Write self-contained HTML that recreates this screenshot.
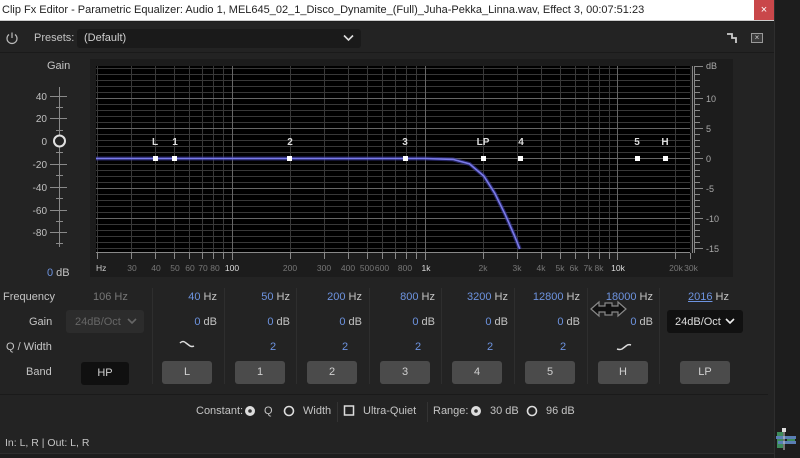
<!DOCTYPE html>
<html><head><meta charset="utf-8"><style>
*{margin:0;padding:0;box-sizing:border-box}
body{width:800px;height:458px;background:#1d1d1d;font-family:"Liberation Sans",sans-serif;overflow:hidden;position:relative;color:#c4c4c4}
.a{position:absolute;white-space:nowrap}
.t{font-size:11px}
.b{color:#6d93df}
.btn{position:absolute;height:23px;width:50px;background:#4b4b4b;border-radius:3px;color:#d0d0d0;font-size:11px;text-align:center;line-height:23px}
.sep{position:absolute;top:288px;width:1px;height:96px;background:#2e2e2e}
.v{position:absolute;width:60px;text-align:right;font-size:11px}
</style></head><body>
<div class="a" style="left:0;top:0;width:774px;height:21px;background:#fff;border-bottom:1px solid #ccc"></div>
<div class="a" style="left:2px;top:4px;font-size:11px;color:#222">Clip Fx Editor - Parametric Equalizer: Audio 1, MEL645_02_1_Disco_Dynamite_(Full)_Juha-Pekka_Linna.wav, Effect 3, 00:07:51:23</div>
<div class="a" style="left:754px;top:0;width:20px;height:20px;background:#c9474a;color:#fff;font-size:11px;text-align:center;line-height:20px">×</div>
<div class="a" style="left:0;top:22px;width:774px;height:431px;background:#232323"></div>
<div class="a" style="left:0;top:52px;width:774px;height:1px;background:#1a1a1a"></div>
<div class="a" style="left:774px;top:0;width:1px;height:458px;background:#2e2e2e"></div>
<div class="a" style="left:0;top:453px;width:774px;height:1px;background:#2e2e2e"></div>
<svg class="a" style="left:5px;top:31px" width="14" height="14" viewBox="0 0 14 14"><path d="M4 3.5A5 5 0 1 0 10 3.5" fill="none" stroke="#bbb" stroke-width="1.2"/><path d="M7 1.5V7" stroke="#bbb" stroke-width="1.2"/></svg>
<div class="a t" style="left:34px;top:32px">Presets:</div>
<div class="a" style="left:77px;top:29px;width:284px;height:19px;background:#1a1a1a;border-radius:3px"></div>
<div class="a t" style="left:84px;top:32px;color:#d0d0d0">(Default)</div>
<svg class="a" style="left:343px;top:34px" width="11" height="8"><path d="M1 1.5L5.5 6 10 1.5" fill="none" stroke="#ddd" stroke-width="1.6"/></svg>
<svg class="a" style="left:726px;top:32px" width="12" height="12"><path d="M1 2H6V6H10V11" fill="none" stroke="#ccc" stroke-width="1.8"/></svg>
<div class="a" style="left:751px;top:33px;width:12px;height:10px;border:1px solid #999;background:#3a3a3a;color:#ccc;font-size:8px;text-align:center;line-height:8px">×</div>
<div class="a t" style="left:47px;top:60px">Gain</div>
<svg class="a" style="left:0;top:0" width="800" height="458">
<g stroke="#8a8a8a" stroke-width="1">
<line x1="59.5" y1="87" x2="59.5" y2="247"/>
<line x1="50" y1="96.5" x2="67" y2="96.5"/><line x1="50" y1="118.5" x2="67" y2="118.5"/><line x1="50" y1="164.5" x2="67" y2="164.5"/><line x1="50" y1="187.5" x2="67" y2="187.5"/><line x1="50" y1="210.5" x2="67" y2="210.5"/><line x1="50" y1="232.5" x2="67" y2="232.5"/>
<line x1="56" y1="107.5" x2="63" y2="107.5"/><line x1="56" y1="130.5" x2="63" y2="130.5"/><line x1="56" y1="152.5" x2="63" y2="152.5"/><line x1="56" y1="175.5" x2="63" y2="175.5"/><line x1="56" y1="198.5" x2="63" y2="198.5"/><line x1="56" y1="221.5" x2="63" y2="221.5"/><line x1="56" y1="243.5" x2="63" y2="243.5"/>
</g>
<circle cx="59.5" cy="141" r="5.5" fill="#232323" stroke="#e0e0e0" stroke-width="2"/>
<g font-size="10" fill="#c0c0c0" text-anchor="end" font-family="Liberation Sans">
<text x="47" y="100">40</text><text x="47" y="122">20</text><text x="47" y="145">0</text><text x="47" y="168">-20</text><text x="47" y="191">-40</text><text x="47" y="214">-60</text><text x="47" y="236">-80</text></g>
<rect x="90" y="59" width="643" height="218" fill="#1c1c1c"/>
<rect x="96" y="66" width="594" height="187" fill="#000"/>
<g stroke="#383838" stroke-width="1">
<path d="M96 68.5H690M96 74.5H690M96 80.5H690M96 86.5H690M96 92.5H690M96 104.5H690M96 110.5H690M96 116.5H690M96 122.5H690M96 134.5H690M96 140.5H690M96 146.5H690M96 152.5H690M96 164.5H690M96 170.5H690M96 176.5H690M96 182.5H690M96 194.5H690M96 200.5H690M96 206.5H690M96 212.5H690M96 224.5H690M96 230.5H690M96 236.5H690M96 242.5H690M96 248.5H690"/>
<path d="M97.5 66V253M131.5 66V253M155.5 66V253M174.5 66V253M189.5 66V253M202.5 66V253M213.5 66V253M223.5 66V253M290.5 66V253M324.5 66V253M348.5 66V253M367.5 66V253M382.5 66V253M395.5 66V253M406.5 66V253M416.5 66V253M483.5 66V253M517.5 66V253M541.5 66V253M560.5 66V253M575.5 66V253M588.5 66V253M599.5 66V253M609.5 66V253M675.5 66V253"/>
</g>
<g stroke="#666" stroke-width="1"><path d="M96 98.5H690M96 128.5H690M96 158.5H690M96 188.5H690M96 218.5H690"/><path d="M232.5 66V253M425.5 66V253M617.5 66V253"/></g>
<g stroke="#888" stroke-width="1">
<path d="M96 252.5H690"/>
<path d="M97.5 253V259M131.5 253V259M155.5 253V259M174.5 253V259M189.5 253V259M202.5 253V259M213.5 253V259M223.5 253V259M232.5 253V260M290.5 253V259M324.5 253V259M348.5 253V259M367.5 253V259M382.5 253V259M395.5 253V259M406.5 253V259M416.5 253V259M425.5 253V260M483.5 253V259M517.5 253V259M541.5 253V259M560.5 253V259M575.5 253V259M588.5 253V259M599.5 253V259M609.5 253V259M617.5 253V260M675.5 253V259M690.5 253V259"/>
<path d="M692.5 66V253M694.5 66V253"/>
<path d="M695 66.5H703M695 98.5H703M695 128.5H703M695 158.5H703M695 188.5H703M695 218.5H703M695 248.5H703"/>
<path d="M695 74.5H700M695 80.5H700M695 86.5H700M695 92.5H700M695 104.5H700M695 110.5H700M695 116.5H700M695 122.5H700M695 134.5H700M695 140.5H700M695 146.5H700M695 152.5H700M695 164.5H700M695 170.5H700M695 176.5H700M695 182.5H700M695 194.5H700M695 200.5H700M695 206.5H700M695 212.5H700M695 224.5H700M695 230.5H700M695 236.5H700M695 242.5H700"/>
</g>
<g font-size="9" fill="#aaa" font-family="Liberation Sans"><text x="706" y="69">dB</text><text x="706" y="102">10</text><text x="706" y="132">5</text><text x="706" y="162">0</text><text x="706" y="192">-5</text><text x="706" y="222">-10</text><text x="706" y="252">-15</text></g>
<g font-size="8.5" fill="#777" text-anchor="middle" font-family="Liberation Sans">
<text x="96" y="271" fill="#ccc" text-anchor="start">Hz</text><text x="132" y="271">30</text><text x="156" y="271">40</text><text x="175" y="271">50</text><text x="190" y="271">60</text><text x="203" y="271">70</text><text x="215" y="271">80</text><text x="232" y="271" fill="#ddd">100</text><text x="290" y="271">200</text><text x="324" y="271">300</text><text x="348" y="271">400</text><text x="367" y="271">500</text><text x="382" y="271">600</text><text x="405" y="271">800</text><text x="426" y="271" fill="#ddd">1k</text><text x="483" y="271">2k</text><text x="517" y="271">3k</text><text x="541" y="271">4k</text><text x="560" y="271">5k</text><text x="574" y="271">6k</text><text x="588" y="271">7k</text><text x="599" y="271">8k</text><text x="618" y="271" fill="#ddd">10k</text><text x="676" y="271">20k</text><text x="691" y="271">30k</text></g>
<path d="M96 158.5H425 L453 159.4 L469.5 163.9 L483.8 176 L494.8 193.3 L505.1 214.3 L514.2 235 L519.8 249" fill="none" stroke="#3a3aa0" stroke-width="4" opacity="0.6"/>
<path d="M96 158.5H425 L453 159.4 L469.5 163.9 L483.8 176 L494.8 193.3 L505.1 214.3 L514.2 235 L519.8 249" fill="none" stroke="#7a7ae8" stroke-width="1.6"/>
<g fill="#fff"><rect x="153" y="156" width="5" height="5"/><rect x="172" y="156" width="5" height="5"/><rect x="287" y="156" width="5" height="5"/><rect x="403" y="156" width="5" height="5"/><rect x="481" y="156" width="5" height="5"/><rect x="518" y="156" width="5" height="5"/><rect x="635" y="156" width="5" height="5"/><rect x="663" y="156" width="5" height="5"/></g>
<g font-size="10" fill="#ddd" text-anchor="middle" font-family="Liberation Sans" font-weight="bold"><text x="155" y="145">L</text><text x="175" y="145">1</text><text x="290" y="145">2</text><text x="405" y="145">3</text><text x="483" y="145">LP</text><text x="521" y="145">4</text><text x="637" y="145">5</text><text x="665" y="145">H</text></g>
<path d="M180 343 Q183 340 186 343 L190 346 Q192 347 194 346" fill="none" stroke="#ddd" stroke-width="1.5"/>
<path d="M617 349 Q620 350 622 349 L626 346 Q628 344 631 345" fill="none" stroke="#ddd" stroke-width="1.5"/>
<path d="M591 309 L599 302 V306 H605 V303 H612 V306 H618 V302 L626 309 L618 316 V312 H612 V315 H605 V312 H599 V316 Z" fill="#111" stroke="#888" stroke-width="1.2"/>
<circle cx="250" cy="411" r="5" fill="#ddd"/><circle cx="250" cy="411" r="1.8" fill="#333"/>
<circle cx="289" cy="411" r="4.5" fill="none" stroke="#ddd" stroke-width="1.6"/>
<rect x="344.5" y="406" width="9" height="9" fill="none" stroke="#ddd" stroke-width="1.5"/>
<circle cx="476" cy="411" r="5" fill="#ddd"/><circle cx="476" cy="411" r="1.8" fill="#333"/>
<circle cx="532" cy="411" r="4.5" fill="none" stroke="#ddd" stroke-width="1.6"/>
<rect x="337" y="402" width="1" height="20" fill="#333"/><rect x="427" y="402" width="1" height="20" fill="#333"/>
<rect x="0" y="394" width="768" height="1" fill="#1a1a1a"/>
<rect x="777" y="432" width="6" height="16" fill="#3d8b5a"/><rect x="787" y="438" width="8" height="5" fill="#3d8b5a"/><rect x="776" y="436" width="20" height="3" fill="#5a7fb5"/><rect x="778" y="441" width="18" height="3" fill="#5a7fb5"/><rect x="783.5" y="430" width="1" height="20" fill="#ccc"/><rect x="782" y="428" width="4" height="4" fill="#ddd"/>
<path d="M128 319L132 323 136 319" fill="none" stroke="#666" stroke-width="1.6"/>
<path d="M726 319L730 323 734 319" fill="none" stroke="#eee" stroke-width="1.6"/>
</svg>
<div class="a t" style="left:47px;top:267px"><span class="b">0</span> dB</div>
<div class="a t" style="left:3px;top:291px">Frequency</div>
<div class="a t" style="left:29px;top:316px">Gain</div>
<div class="a t" style="left:6px;top:341px">Q / Width</div>
<div class="a t" style="left:26px;top:366px">Band</div>
<div class="a t" style="left:93px;top:291px;color:#777">106 Hz</div>
<div class="a" style="left:66px;top:310px;width:78px;height:23px;background:#2c2c2c;border-radius:3px;z-index:-0"></div>
<div class="a t" style="left:75px;top:316px;color:#666">24dB/Oct</div>
<div class="btn" style="left:81px;top:362px;width:48px;background:#101010">HP</div>
<div class="sep" style="left:152px"></div><div class="sep" style="left:224px"></div><div class="sep" style="left:296px"></div><div class="sep" style="left:369px"></div><div class="sep" style="left:441px"></div><div class="sep" style="left:514px"></div><div class="sep" style="left:587px"></div><div class="sep" style="left:659px"></div>
<div class="v" style="left:157px;top:291px"><span class="b">40</span> Hz</div>
<div class="v" style="left:230px;top:291px"><span class="b">50</span> Hz</div>
<div class="v" style="left:302px;top:291px"><span class="b">200</span> Hz</div>
<div class="v" style="left:375px;top:291px"><span class="b">800</span> Hz</div>
<div class="v" style="left:448px;top:291px"><span class="b">3200</span> Hz</div>
<div class="v" style="left:520px;top:291px"><span class="b">12800</span> Hz</div>
<div class="v" style="left:593px;top:291px"><span class="b">18000</span> Hz</div>
<div class="a t" style="left:688px;top:291px"><span class="b" style="text-decoration:underline">2016</span> Hz</div>
<div class="v" style="left:157px;top:316px"><span class="b">0</span> dB</div>
<div class="v" style="left:230px;top:316px"><span class="b">0</span> dB</div>
<div class="v" style="left:302px;top:316px"><span class="b">0</span> dB</div>
<div class="v" style="left:375px;top:316px"><span class="b">0</span> dB</div>
<div class="v" style="left:448px;top:316px"><span class="b">0</span> dB</div>
<div class="v" style="left:520px;top:316px"><span class="b">0</span> dB</div>
<div class="v" style="left:593px;top:316px"><span class="b">0</span> dB</div>
<div class="a" style="left:667px;top:310px;width:76px;height:23px;background:#111;border-radius:3px"></div>
<div class="a t" style="left:675px;top:316px;color:#ddd">24dB/Oct</div>
<svg class="a" style="left:0;top:0" width="800" height="458"><path d="M128 319L132 323 136 319" fill="none" stroke="#666" stroke-width="1.6"/><path d="M726 319L730 323 734 319" fill="none" stroke="#eee" stroke-width="1.6"/></svg>
<div class="a t b" style="left:270px;top:341px">2</div>
<div class="a t b" style="left:342px;top:341px">2</div>
<div class="a t b" style="left:415px;top:341px">2</div>
<div class="a t b" style="left:487px;top:341px">2</div>
<div class="a t b" style="left:560px;top:341px">2</div>
<div class="btn" style="left:162px;top:361px">L</div>
<div class="btn" style="left:235px;top:361px">1</div>
<div class="btn" style="left:307px;top:361px">2</div>
<div class="btn" style="left:380px;top:361px">3</div>
<div class="btn" style="left:452px;top:361px">4</div>
<div class="btn" style="left:525px;top:361px">5</div>
<div class="btn" style="left:598px;top:361px">H</div>
<div class="btn" style="left:680px;top:361px">LP</div>
<div class="a t" style="left:196px;top:405px">Constant:</div>
<div class="a t" style="left:264px;top:405px">Q</div>
<div class="a t" style="left:303px;top:405px">Width</div>
<div class="a t" style="left:363px;top:405px">Ultra-Quiet</div>
<div class="a t" style="left:433px;top:405px">Range:</div>
<div class="a t" style="left:490px;top:405px">30 dB</div>
<div class="a t" style="left:546px;top:405px">96 dB</div>
<div class="a" style="left:5px;top:437px;font-size:10.5px">In: L, R | Out: L, R</div>
</body></html>
